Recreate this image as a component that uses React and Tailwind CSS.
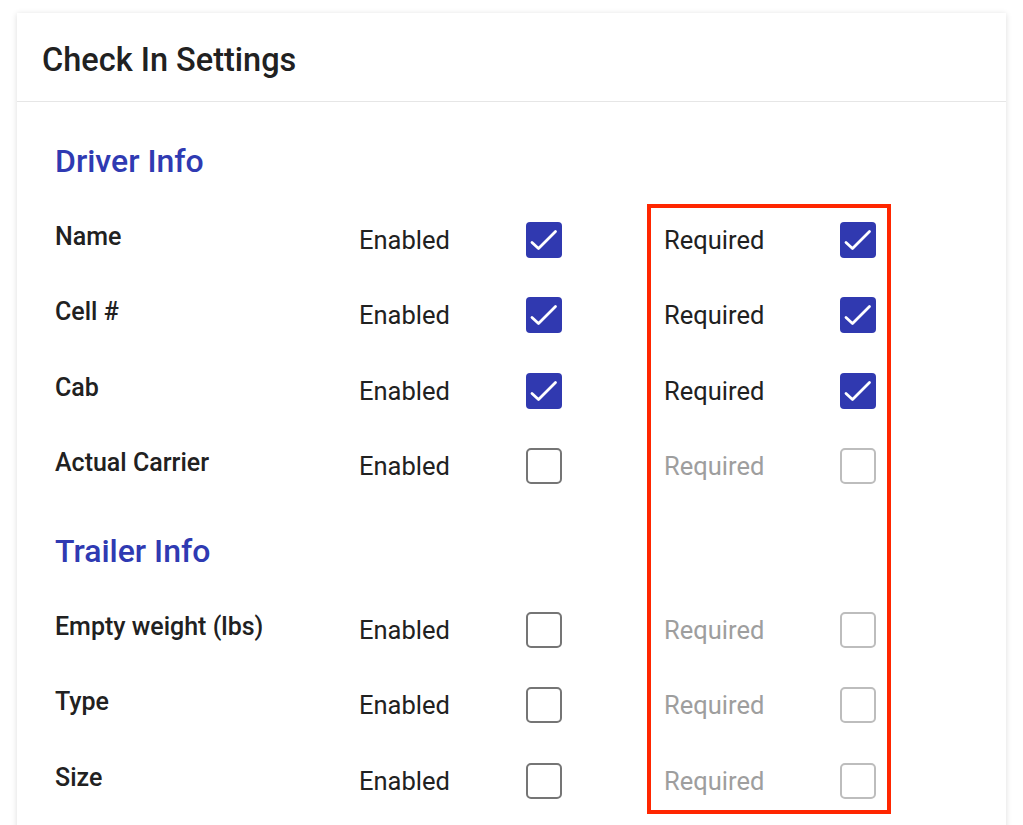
import React from "react";

const sections = [
  {
    title: "Driver Info",
    fields: [
      { name: "Name", enabled: true, required: true },
      { name: "Cell #", enabled: true, required: true },
      { name: "Cab", enabled: true, required: true },
      { name: "Actual Carrier", enabled: false, required: false },
    ],
  },
  {
    title: "Trailer Info",
    fields: [
      { name: "Empty weight (lbs)", enabled: false, required: false },
      { name: "Type", enabled: false, required: false },
      { name: "Size", enabled: false, required: false },
    ],
  },
];

const Checkbox = ({ checked, disabled }) => {
  if (checked) {
    return (
      <div className="w-[36px] h-[36px] rounded-[4px] bg-[#3039b0] flex items-center justify-center">
        <svg width="36" height="36" viewBox="0 0 36 36" fill="none">
          <path
            d="M6 20.5 L12.5 26.5 L29.5 9.5"
            stroke="white"
            strokeWidth="2.8"
            strokeLinecap="round"
            strokeLinejoin="round"
          />
        </svg>
      </div>
    );
  }
  return (
    <div
      className={`w-[36px] h-[36px] rounded-[5px] border-[2.5px] ${
        disabled ? "border-[#bdbdbd]" : "border-[#757575]"
      }`}
    />
  );
};

const FieldRow = ({ field }) => {
  return (
    <div className="grid grid-cols-[304px_167px_36px_102px_176px_36px] items-center h-[75.5px]">
      <div className="text-[25px] font-medium text-[#212121] pb-[7px]">
        {field.name}
      </div>
      <div className="text-[25.5px] text-[#212121]">Enabled</div>
      <Checkbox checked={field.enabled} />
      <div />
      <div
        className={`text-[25.5px] ${
          field.enabled ? "text-[#212121]" : "text-[#9e9e9e]"
        }`}
      >
        Required
      </div>
      <Checkbox checked={field.required} disabled={!field.enabled} />
    </div>
  );
};

export default function App() {
  return (
    <div
      className="min-h-[825px] bg-white pl-[17px] pt-[13px] pr-[17px] overflow-hidden"
      style={{ fontFamily: "Roboto, 'Liberation Sans', sans-serif" }}
    >
      <div className="relative w-[989px] h-[830px] bg-white shadow-[0_1px_6px_rgba(0,0,0,0.14)]">
        <div className="h-[89px] border-b border-[#e6e6e6] pl-[25px] flex items-center">
          <h1 className="text-[32.5px] font-medium text-[#212121] pt-[6px]">
            Check In Settings
          </h1>
        </div>

        <div className="pl-[38px] pt-[18px]">
          {sections.map((section, i) => (
            <div key={section.title} className={i > 0 ? "mt-[6px]" : ""}>
              <div className="h-[82px] flex items-center">
                <h2 className="text-[32px] font-medium text-[#2f3ab2]">
                  {section.title}
                </h2>
              </div>
              {section.fields.map((field) => (
                <FieldRow key={field.name} field={field} />
              ))}
            </div>
          ))}
        </div>

        {/* highlight around the Required column */}
        <div className="absolute left-[630px] top-[191px] w-[244px] h-[610px] border-[4.5px] border-[#ff2600] pointer-events-none" />
      </div>
    </div>
  );
}
